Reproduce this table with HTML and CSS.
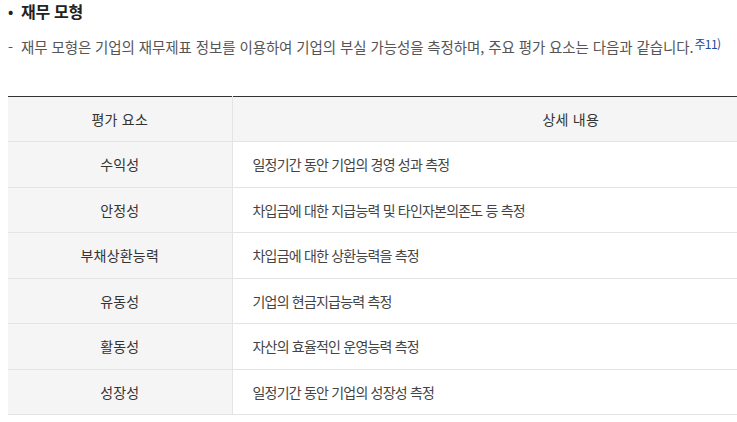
FILE: index.html
```html
<!DOCTYPE html>
<html lang="ko">
<head>
<meta charset="utf-8">
<link rel="stylesheet" href="styles.css">
</head>
<body>
<div class="page">
  <h3 class="title"><span class="dot">•</span>재무 모형</h3>
  <p class="desc"><span class="dash">-</span>재무 모형은 기업의 재무제표 정보를 이용하여 기업의 부실 가능성을 측정하며, 주요 평가 요소는 다음과 같습니다.<sup class="note">주11)</sup></p>
  <table class="tbl">
    <colgroup><col class="c1"><col class="c2"></colgroup>
    <thead>
      <tr><th>평가 요소</th><th>상세 내용</th></tr>
    </thead>
    <tbody>
      <tr><th>수익성</th><td>일정기간 동안 기업의 경영 성과 측정</td></tr>
      <tr><th>안정성</th><td>차입금에 대한 지급능력 및 타인자본의존도 등 측정</td></tr>
      <tr><th>부채상환능력</th><td>차입금에 대한 상환능력을 측정</td></tr>
      <tr><th>유동성</th><td>기업의 현금지급능력 측정</td></tr>
      <tr><th>활동성</th><td>자산의 효율적인 운영능력 측정</td></tr>
      <tr><th>성장성</th><td>일정기간 동안 기업의 성장성 측정</td></tr>
    </tbody>
  </table>
</div>
</body>
</html>
```
FILE: styles.css
```css
html, body {
  margin: 0;
  padding: 0;
  overflow: hidden;
  background: #fff;
}
body {
  font-family: "Noto Sans CJK KR", "Noto Sans", sans-serif;
  color: #333;
}
.page {
  padding: 0 0 0 8px;
  width: 1000px;
}
.title {
  margin: 0;
  height: 25px;
  font-size: 16px;
  font-weight: 700;
  line-height: 22px;
  color: #222;
  letter-spacing: -0.3px;
  display: flex;
  align-items: flex-start;
}
.dot {
  width: 13px;
  font-size: 14px;
}
.desc {
  margin: 10px 0 0 0;
  height: 24px;
  font-size: 14.5px;
  line-height: 24px;
  color: #555;
  letter-spacing: -0.1px;
  display: flex;
  align-items: baseline;
}
.dash {
  width: 13px;
}
.note {
  font-size: 12px;
  color: #1a4a9a;
  line-height: 1;
  letter-spacing: -0.6px;
  align-self: flex-start;
  margin-top: 3px;
  margin-left: 1px;
}
.tbl {
  margin-top: 37px;
  width: 902px;
  border-collapse: collapse;
  border-top: 1px solid #333;
  font-size: 14px;
}
.c1 { width: 224px; }
.tbl th, .tbl td {
  height: 44.5px;
  padding: 0;
  border-bottom: 1px solid #e4e4e4;
  border-right: 1px solid #e4e4e4;
  font-weight: 400;
  color: #333;
}
.tbl th {
  letter-spacing: 0.2px;
}
.tbl thead th {
  background: #f5f5f5;
  text-align: center;
  height: 44px;
}
.tbl tbody th {
  background: #f5f5f5;
  text-align: center;
}
.tbl td {
  text-align: left;
  padding-left: 20px;
  color: #444;
  letter-spacing: -0.8px;
}
```
